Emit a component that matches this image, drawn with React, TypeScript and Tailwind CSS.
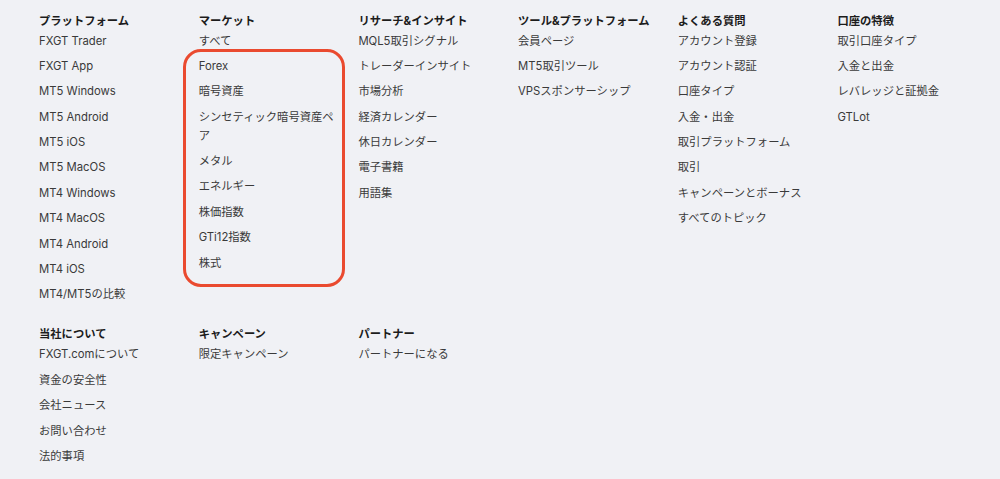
import React from "react";

type Col = { title: string; items: string[]; boxed?: boolean };

const row1: Col[] = [
  {
    title: "プラットフォーム",
    items: [
      "FXGT Trader",
      "FXGT App",
      "MT5 Windows",
      "MT5 Android",
      "MT5 iOS",
      "MT5 MacOS",
      "MT4 Windows",
      "MT4 MacOS",
      "MT4 Android",
      "MT4 iOS",
      "MT4/MT5の比較",
    ],
  },
  {
    title: "マーケット",
    items: [
      "すべて",
      "Forex",
      "暗号資産",
      "シンセティック暗号資産ペア",
      "メタル",
      "エネルギー",
      "株価指数",
      "GTi12指数",
      "株式",
    ],
    boxed: true,
  },
  {
    title: "リサーチ&インサイト",
    items: ["MQL5取引シグナル", "トレーダーインサイト", "市場分析", "経済カレンダー", "休日カレンダー", "電子書籍", "用語集"],
  },
  {
    title: "ツール&プラットフォーム",
    items: ["会員ページ", "MT5取引ツール", "VPSスポンサーシップ"],
  },
  {
    title: "よくある質問",
    items: [
      "アカウント登録",
      "アカウント認証",
      "口座タイプ",
      "入金・出金",
      "取引プラットフォーム",
      "取引",
      "キャンペーンとボーナス",
      "すべてのトピック",
    ],
  },
  {
    title: "口座の特徴",
    items: ["取引口座タイプ", "入金と出金", "レバレッジと証拠金", "GTLot"],
  },
];

const row2: Col[] = [
  { title: "当社について", items: ["FXGT.comについて", "資金の安全性", "会社ニュース", "お問い合わせ", "法的事項"] },
  { title: "キャンペーン", items: ["限定キャンペーン"] },
  { title: "パートナー", items: ["パートナーになる"] },
];

function Item({ text }: { text: string }) {
  return <li className="leading-[19px] text-[#3a3a3a]">{text}</li>;
}

function Column({ col }: { col: Col }) {
  const first = col.boxed ? col.items.slice(0, 1) : col.items;
  const rest = col.boxed ? col.items.slice(1) : [];
  return (
    <div className="w-[159.7px] pr-[18px]">
      <h3 className="mb-[1px] text-[11.3px] font-bold leading-[19px] text-[#1c1c1c]">{col.title}</h3>
      <ul className="flex flex-col gap-[6.4px]">
        {first.map((t) => (
          <Item key={t} text={t} />
        ))}
        {col.boxed && (
          <li className="relative">
            <span className="pointer-events-none absolute left-[-16px] top-[-7.5px] bottom-[-14.5px] w-[162px] rounded-[18px] border-[3px] border-[#ea4a2f]" />
            <ul className="flex flex-col gap-[6.4px]">
              {rest.map((t) => (
                <Item key={t} text={t} />
              ))}
            </ul>
          </li>
        )}
      </ul>
    </div>
  );
}

export default function App() {
  return (
    <div className="min-h-[479px] w-full bg-[#f0f1f5] pl-[39px] pt-[11.5px] font-['Inter','Noto_Sans_CJK_JP',sans-serif] text-[11.3px]">
      <div className="flex">
        {row1.map((c) => (
          <Column key={c.title} col={c} />
        ))}
      </div>
      <div className="mt-[21px] flex">
        {row2.map((c) => (
          <Column key={c.title} col={c} />
        ))}
      </div>
    </div>
  );
}
